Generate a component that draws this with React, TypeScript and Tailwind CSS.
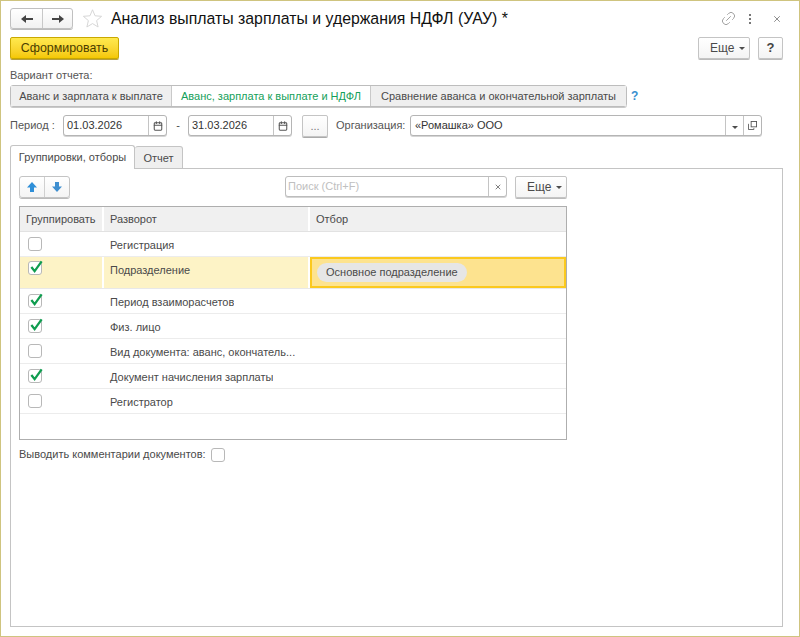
import { Calendar, Link2, X } from "lucide-react";

const font = { fontFamily: '"Liberation Sans", Arial, sans-serif' };

function Caret() {
  return <span className="ml-[5px] inline-block h-0 w-0 border-x-[3px] border-t-[3px] border-x-transparent border-t-[#4d4d4d]" />;
}

function Check({ on, className = "" }: { on?: boolean; className?: string }) {
  return (
    <span className={`relative block h-[14px] w-[14px] rounded-[3px] border border-[#b8b8b8] bg-white ${className}`}>
      {on ? (
        <svg viewBox="0 0 16 16" className="absolute -top-[3px] left-0 h-[15px] w-[15px]">
          <path d="M2.5 8.5 L6 13 L13.5 2.5" fill="none" stroke="#0f9d4f" strokeWidth="2.4" />
        </svg>
      ) : null}
    </span>
  );
}

function DateField({ value }: { value: string }) {
  return (
    <div className="flex h-[21px] w-[104px] items-stretch rounded-[3px] border border-[#b5b5b5] bg-white shadow-[0_1px_0_#d5d5d5]">
      <span className="flex-1 pl-[3px] leading-[19px] text-[#333]">{value}</span>
      <span className="flex w-[18px] items-center justify-center border-l border-[#c4c4c4]">
        <Calendar size={10} color="#555" strokeWidth={2.5} />
      </span>
    </div>
  );
}

function MoreButton() {
  return (
    <button className="flex h-[22px] w-[52px] items-center justify-start rounded-[2px] border border-[#c4c4c4] bg-gradient-to-b from-white to-[#f4f4f4] pl-[11px] text-[12px] shadow-[0_1px_0_#bbb]">
      Еще<Caret />
    </button>
  );
}

const rows = [
  { name: "Регистрация", on: false },
  { name: "Подразделение", on: true, active: true },
  { name: "Период взаиморасчетов", on: true },
  { name: "Физ. лицо", on: true },
  { name: "Вид документа: аванс, окончатель...", on: false },
  { name: "Документ начисления зарплаты", on: true },
  { name: "Регистратор", on: false },
];

export default function App() {
  return (
    <div style={font} className="flex h-[637px] w-[800px] flex-col overflow-hidden border border-[#cfc47f] bg-white pl-[9px] pr-[16px] text-[11px] text-[#4a4a4a]">
      {/* header */}
      <div className="flex h-[36px] items-start pt-[7px]">
        <div className="flex h-[21px] w-[63px] rounded-[3px] border border-[#c0c0c0] bg-gradient-to-b from-white to-[#f1f1f1] shadow-[0_1px_0_#bbb]">
          <span className="flex w-[32px] items-center justify-center border-r border-[#c8c8c8]">
            <svg viewBox="0 0 12 10" className="h-[10px] w-[12px]"><path d="M0 5 L5 1 V4 H12 V6 H5 V9 Z" fill="#444" /></svg>
          </span>
          <span className="flex flex-1 items-center justify-center">
            <svg viewBox="0 0 12 10" className="h-[10px] w-[12px]"><path d="M12 5 L7 1 V4 H0 V6 H7 V9 Z" fill="#444" /></svg>
          </span>
        </div>
        <svg viewBox="0 0 24 24" className="ml-[9px] h-[21px] w-[21px]">
          <path d="M12 2 L14.9 8.9 L22.4 9.5 L16.7 14.4 L18.4 21.7 L12 17.8 L5.6 21.7 L7.3 14.4 L1.6 9.5 L9.1 8.9 Z" fill="#fff" stroke="#d4d4d4" strokeWidth="1.1" />
        </svg>
        <div className="ml-[8px] text-[15.85px] leading-[21px] text-[#111]">Анализ выплаты зарплаты и удержания НДФЛ (УАУ) *</div>
        <div className="ml-auto flex items-center pt-[2px]">
          <Link2 size={17} color="#a0a0a0" strokeWidth={1.3} className="-rotate-45" />
          <span className="ml-[12px] flex h-[10px] w-[3px] flex-col justify-between">
            <span className="h-[2px] w-[2px] bg-[#777]" />
            <span className="h-[2px] w-[2px] bg-[#777]" />
            <span className="h-[2px] w-[2px] bg-[#777]" />
          </span>
          <X size={10} color="#777" strokeWidth={2} className="ml-[20px] mr-[1px]" />
        </div>
      </div>

      {/* command bar */}
      <div className="flex h-[23px] items-start">
        <button className="h-[22px] w-[109px] rounded-[2px] border border-[#c9a800] bg-gradient-to-b from-[#ffe94d] to-[#f5c800] text-[12.4px] leading-[20px] text-[#4a3d00] shadow-[0_1px_0_#b5a040]">Сформировать</button>
        <div className="ml-auto"><MoreButton /></div>
        <button className="ml-[8px] h-[22px] w-[25px] rounded-[2px] border border-[#c4c4c4] bg-gradient-to-b from-white to-[#f4f4f4] text-[13px] font-bold leading-[20px] text-[#444] shadow-[0_1px_0_#bbb]">?</button>
      </div>

      <div className="mt-[8px] h-[15px] leading-[15px] text-[#555]">Вариант отчета:</div>

      {/* report variants */}
      <div className="mt-[2px] flex h-[22px] items-center">
        <div className="flex h-[22px] w-[617px] rounded-[3px] border border-[#bdbdbd] shadow-[0_1px_0_#c9c9c9]">
          <span className="flex w-[160px] items-center justify-center bg-[#efefef]">Аванс и зарплата к выплате</span>
          <span className="flex w-[200px] items-center justify-center border-x border-[#c9c9c9] bg-white text-[#14a05a]">Аванс, зарплата к выплате и НДФЛ</span>
          <span className="flex flex-1 items-center justify-center bg-[#efefef]">Сравнение аванса и окончательной зарплаты</span>
        </div>
        <span className="ml-[4px] text-[12px] font-bold text-[#3a8fd0]">?</span>
      </div>

      {/* period */}
      <div className="mt-[8px] flex h-[22px] items-start">
        <span className="w-[53px] leading-[21px] text-[#555]">Период :</span>
        <DateField value="01.03.2026" />
        <span className="w-[21px] pl-[1px] text-center leading-[21px]">-</span>
        <DateField value="31.03.2026" />
        <button className="ml-[10px] h-[22px] w-[26px] rounded-[2px] border border-[#c4c4c4] bg-gradient-to-b from-white to-[#f4f4f4] leading-[20px] text-[#777] shadow-[0_1px_0_#aaa]">...</button>
        <span className="ml-[8px] w-[74px] leading-[21px] text-[#555]">Организация:</span>
        <div className="flex h-[21px] w-[352px] items-stretch rounded-[3px] border border-[#b5b5b5] bg-white shadow-[0_1px_0_#d5d5d5]">
          <span className="flex-1 pl-[4px] leading-[19px] text-[#333]">«Ромашка» ООО</span>
          <span className="flex w-[18px] items-center justify-center border-l border-[#c4c4c4]"><span className="-ml-[5px]"><Caret /></span></span>
          <span className="flex w-[18px] items-center justify-center border-l border-[#c4c4c4]">
            <svg viewBox="0 0 10 10" className="h-[9px] w-[9px]" fill="none" stroke="#555" strokeWidth="1">
              <rect x="3.5" y="0.5" width="6" height="6" />
              <path d="M1 3.5 H0.5 V9.5 H6.5 V8" />
            </svg>
          </span>
        </div>
      </div>

      {/* tabs */}
      <div className="relative z-10 mt-[8px] flex h-[24px] items-end">
        <div className="h-[24px] w-[125px] rounded-t-[3px] border border-b-0 border-[#c4c4c4] bg-white text-center leading-[22px]">Группировки, отборы</div>
        <div className="h-[23px] w-[48px] rounded-t-[3px] border border-l-0 border-[#c4c4c4] bg-[#efefef] text-center leading-[22px]">Отчет</div>
      </div>

      <div className="-mt-px mb-[9px] flex flex-1 flex-col border border-[#c4c4c4] pl-[8px] pr-[215px]">
        {/* toolbar */}
        <div className="mt-[7px] flex h-[23px] items-start">
          <div className="flex h-[22px] w-[51px] rounded-[3px] border border-[#c4c4c4] bg-gradient-to-b from-white to-[#f4f4f4] shadow-[0_1px_0_#bbb]">
            <span className="flex w-[25px] items-center justify-center border-r border-[#d0d0d0]">
              <svg viewBox="0 0 12 12" className="h-[12px] w-[12px]"><path d="M6 1 L11 6.5 H8 V11 H4 V6.5 H1 Z" fill="#2f8fd8" /></svg>
            </span>
            <span className="flex flex-1 items-center justify-center">
              <svg viewBox="0 0 12 12" className="h-[12px] w-[12px]"><path d="M6 11 L11 5.5 H8 V1 H4 V5.5 H1 Z" fill="#3f8fd0" /></svg>
            </span>
          </div>
          <div className="ml-[215px] flex h-[21px] w-[222px] items-stretch rounded-[3px] border border-[#bdbdbd] bg-white shadow-[0_1px_0_#d5d5d5]">
            <span className="flex-1 pl-[2px] leading-[19px] text-[#c0c0c0]">Поиск (Ctrl+F)</span>
            <span className="flex w-[18px] items-center justify-center border-l border-[#c4c4c4]">
              <X size={8} color="#666" strokeWidth={2.5} />
            </span>
          </div>
          <div className="ml-[8px]"><MoreButton /></div>
        </div>

        {/* table */}
        <div className="mt-[7px] flex h-[234px] flex-col border border-[#aeaeae] bg-white">
          <div className="flex h-[25px] shrink-0 border-b border-[#e2e2e2] bg-[#f0f0f0] leading-[24px]">
            <span className="w-[84px] shrink-0 border-r-2 border-white pl-[6px]">Группировать</span>
            <span className="w-[206px] shrink-0 border-r-2 border-white pl-[6px]">Разворот</span>
            <span className="flex-1 pl-[6px]">Отбор</span>
          </div>
          {rows.map((row) =>
            row.active ? (
              <div key={row.name} className="flex h-[32px] shrink-0 border-b border-[#e8e8e8] bg-[#fdf3c6]">
                <span className="w-[84px] shrink-0 border-r-2 border-white pl-[8px] pt-[4px]"><Check on={row.on} /></span>
                <span className="w-[206px] shrink-0 border-r-2 border-white pl-[6px] pt-[6px] leading-[15px]">{row.name}</span>
                <span className="flex flex-1 items-center border-2 border-[#fbc91e] bg-[#fde38f] pl-[5px]">
                  <span className="rounded-full bg-[#e6e6e6] px-[9px] leading-[19px]">Основное подразделение</span>
                </span>
              </div>
            ) : (
              <div key={row.name} className="flex h-[25px] shrink-0 items-center border-b border-[#ececec] pt-px">
                <span className="w-[84px] shrink-0 pl-[8px]"><Check on={row.on} className="-mt-[2px]" /></span>
                <span className="truncate pl-[6px] pt-[2px]">{row.name}</span>
              </div>
            ),
          )}
        </div>

        <div className="mt-[7px] flex h-[15px] items-center">
          <span>Выводить комментарии документов:</span>
          <Check className="ml-[5px]" />
        </div>
      </div>
    </div>
  );
}
